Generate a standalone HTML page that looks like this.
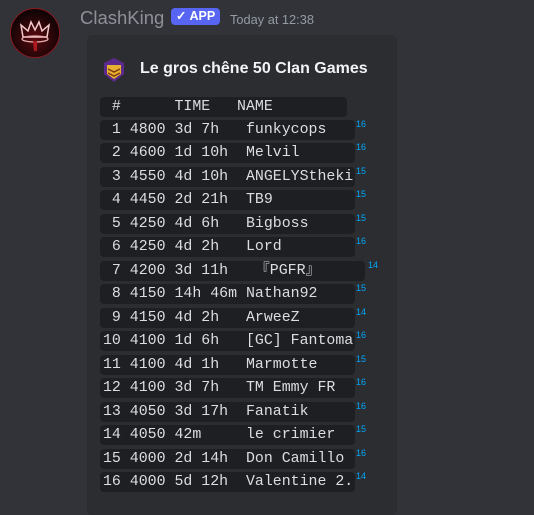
<!DOCTYPE html>
<html><head><meta charset="utf-8"><style>
body{margin:0;width:534px;height:497px;background:#313338;overflow:hidden;position:relative;font-family:"Liberation Sans",sans-serif}
.av{position:absolute;left:10px;top:8px;width:50px;height:50px;border-radius:50%;background:radial-gradient(circle at 50% 60%,#5a0a10,#120405 70%);border:1px solid #8a1a20;box-sizing:border-box}
.name{position:absolute;left:80px;top:7px;color:#8e9099;font-size:18.5px}
.app{position:absolute;left:171px;top:8px;background:#5865f2;color:#fff;font-size:12.5px;font-weight:bold;border-radius:4px;padding:0 5px;height:17px;line-height:17px}
.ts{position:absolute;left:230px;top:12px;color:#949ba4;font-size:12.8px}
.embed{position:absolute;left:87px;top:35px;width:310px;height:480px;background:#2b2d31;border-radius:5px}
.title{position:absolute;left:140px;top:60px;color:#f2f3f5;font-weight:bold;font-size:16px}
.icon{position:absolute;left:102px;top:57px;width:24px;height:26px}
.r{position:absolute;left:100px;width:250px;height:20px;line-height:20px;background:#1e1f22;border-radius:4px;color:#dbdee1;font-family:"Liberation Mono",monospace;font-size:14.9px;white-space:pre;padding:0 2px 0 3px}
.s{position:absolute;left:356px;color:#00a8fc;font-size:9px}
</style></head><body>
<div class="av"><svg width="48" height="48" viewBox="0 0 48 48"><path d="M12 28 L10 16 L17 22 L20 13 L24 21 L28 13 L31 22 L38 16 L36 28 Z" fill="none" stroke="#f3c9c9" stroke-width="1.5"/><ellipse cx="24" cy="30" rx="13" ry="3" fill="none" stroke="#e8b0b0" stroke-width="1.3"/><path d="M22 32 L23 42 L26 42 L26 32" fill="#b01820"/></svg></div>
<div class="name">ClashKing</div>
<div class="app">✓ APP</div>
<div class="ts">Today at 12:38</div>
<div class="embed"></div>
<svg class="icon" viewBox="0 0 24 26"><path d="M12 1 L22 6 L22 17 L12 25 L2 17 L2 6 Z" fill="#5b2a8c"/><path d="M5 8 L19 8 L19 17 L12 22 L5 17 Z" fill="#e8b030"/><path d="M6 12 L12 15 L18 12 M6 16 L12 19 L18 16" stroke="#7a3a10" stroke-width="1.5" fill="none"/></svg>
<div class="title">Le gros chêne 50 Clan Games</div>
<div class="r" style="top:97px;width:242px"> #      TIME   NAME</div>
<div class="r" style="top:120px"> 1 4800 3d 7h   funkycops</div><div class="s" style="top:119px">16</div>
<div class="r" style="top:143px"> 2 4600 1d 10h  Melvil</div><div class="s" style="top:142px">16</div>
<div class="r" style="top:167px"> 3 4550 4d 10h  ANGELYStheki</div><div class="s" style="top:166px">15</div>
<div class="r" style="top:190px"> 4 4450 2d 21h  TB9</div><div class="s" style="top:189px">15</div>
<div class="r" style="top:214px"> 5 4250 4d 6h   Bigboss</div><div class="s" style="top:213px">15</div>
<div class="r" style="top:237px"> 6 4250 4d 2h   Lord</div><div class="s" style="top:236px">16</div>
<div class="r" style="top:261px;width:260px"> 7 4200 3d 11h   『PGFR』</div><div class="s" style="left:368px;top:260px">14</div>
<div class="r" style="top:284px"> 8 4150 14h 46m Nathan92</div><div class="s" style="top:283px">15</div>
<div class="r" style="top:308px"> 9 4150 4d 2h   ArweeZ</div><div class="s" style="top:307px">14</div>
<div class="r" style="top:331px">10 4100 1d 6h   [GC] Fantoma</div><div class="s" style="top:330px">16</div>
<div class="r" style="top:355px">11 4100 4d 1h   Marmotte</div><div class="s" style="top:354px">15</div>
<div class="r" style="top:378px">12 4100 3d 7h   TM Emmy FR</div><div class="s" style="top:377px">16</div>
<div class="r" style="top:402px">13 4050 3d 17h  Fanatik</div><div class="s" style="top:401px">16</div>
<div class="r" style="top:425px">14 4050 42m     le crimier</div><div class="s" style="top:424px">15</div>
<div class="r" style="top:449px">15 4000 2d 14h  Don Camillo</div><div class="s" style="top:448px">16</div>
<div class="r" style="top:472px">16 4000 5d 12h  Valentine 2.</div><div class="s" style="top:471px">14</div>
</body></html>
